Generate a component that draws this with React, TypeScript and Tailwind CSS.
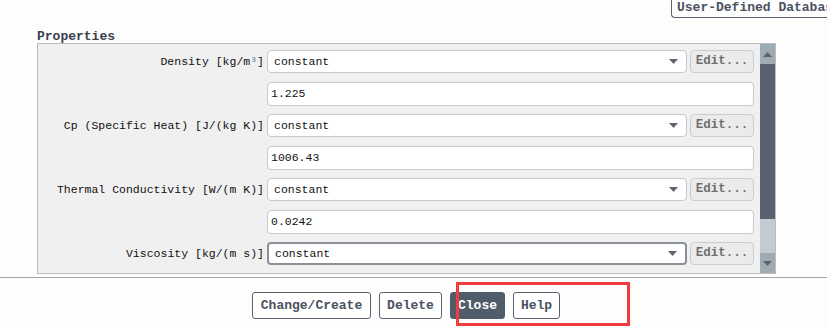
import React from "react";

const mono = { fontFamily: '"Liberation Mono", "DejaVu Sans Mono", monospace' };

function Arrow() {
  return (
    <svg width="9" height="5" viewBox="0 0 9 5" className="shrink-0">
      <polygon points="0,0 9,0 4.5,5" fill="#5f6670" />
    </svg>
  );
}

function DropRow({ label, focused }: { label: React.ReactNode; focused?: boolean }) {
  return (
    <div className="flex items-center h-[23px]">
      <div className="w-[229px] pr-[3px] text-right text-[11.5px] leading-[23px] text-[#111111] whitespace-nowrap">
        {label}
      </div>
      <div
        className={
          "w-[420px] h-[23px] bg-white rounded-[4px] flex items-center justify-between pl-[6px] pr-[8px] " +
          (focused ? "border-2 border-[#8a9099]" : "border border-[#c3cad2]")
        }
      >
        <span className="text-[11.5px] text-[#111111]">constant</span>
        <Arrow />
      </div>
      <div className="ml-[3px] w-[64px] h-[23px] rounded-[4px] border border-[#c8cdd2] bg-[#ebebeb] flex items-center justify-center text-[12.5px] font-bold text-[#6f6f6f]">
        Edit...
      </div>
    </div>
  );
}

function ValueRow({ value }: { value: string }) {
  return (
    <div className="flex items-center h-[23px]">
      <div className="ml-[229px] w-[487px] h-[24px] bg-white rounded-[4px] border border-[#c3cad2] flex items-center pl-[3px] text-[11.5px] text-[#111111]">
        {value}
      </div>
    </div>
  );
}

export default function App() {
  return (
    <div className="relative w-[827px] h-[328px] overflow-hidden bg-[#fdfdfd]" style={mono}>
      <div className="flex h-[18px] pl-[671px]">
        <div className="h-[18px] pl-[5px] pr-[4px] border-l border-b border-[#5a6470] rounded-bl-[4px] text-[13px] font-bold leading-[15px] text-[#4a5260] whitespace-nowrap">
          User-Defined Database
        </div>
      </div>

      <div className="ml-[37px] mt-[13px] h-[12px] text-[13px] font-bold leading-[12px] text-[#3a4250]">
        Properties
      </div>

      <div className="ml-[37px] w-[739px] h-[231px] border border-[#bdbdbd] bg-[#f0f0f0] flex">
        <div className="flex-1 flex flex-col gap-[9px] pt-[6px]">
          <DropRow label={<>Density [kg/m<span className="text-[#4a6fa0]">³</span>]</>} />
          <ValueRow value="1.225" />
          <DropRow label="Cp (Specific Heat) [J/(kg K)]" />
          <ValueRow value="1006.43" />
          <DropRow label="Thermal Conductivity [W/(m K)]" />
          <ValueRow value="0.0242" />
          <DropRow label="Viscosity [kg/(m s)]" focused />
        </div>
        <div className="w-[15px] flex flex-col">
          <div className="h-[20px] bg-[#9eabb3] flex items-center justify-center">
            <svg width="9" height="5" viewBox="0 0 9 5">
              <polygon points="0,5 9,5 4.5,0" fill="#5a6470" />
            </svg>
          </div>
          <div className="h-[155px] bg-[#5a6170]" />
          <div className="flex-1 bg-[#c2cbcf]" />
          <div className="h-[20px] bg-[#9eabb3] flex items-center justify-center">
            <svg width="9" height="5" viewBox="0 0 9 5">
              <polygon points="0,0 9,0 4.5,5" fill="#5a6470" />
            </svg>
          </div>
        </div>
      </div>

      <div className="mt-[3px] h-px bg-[#a6a6a6]" />

      <div className="mt-[14px] flex gap-[8px] pl-[252px]">
        <div className="w-[119px] h-[27px] rounded-[3px] border border-[#5a6470] bg-white flex items-center justify-center text-[13px] font-bold text-[#4a5260]">
          Change/Create
        </div>
        <div className="w-[63px] h-[27px] rounded-[3px] border border-[#5a6470] bg-white flex items-center justify-center text-[13px] font-bold text-[#4a5260]">
          Delete
        </div>
        <div className="w-[55px] h-[27px] rounded-[3px] border border-[#515c6b] bg-[#515c6b] flex items-center justify-center text-[13px] font-bold text-white">
          Close
        </div>
        <div className="w-[47px] h-[27px] rounded-[3px] border border-[#5a6470] bg-white flex items-center justify-center text-[13px] font-bold text-[#4a5260]">
          Help
        </div>
      </div>

      <div className="absolute left-[456px] top-[282px] w-[174px] h-[44px] border-[3px] border-[#ef3c3c]" />
    </div>
  );
}
